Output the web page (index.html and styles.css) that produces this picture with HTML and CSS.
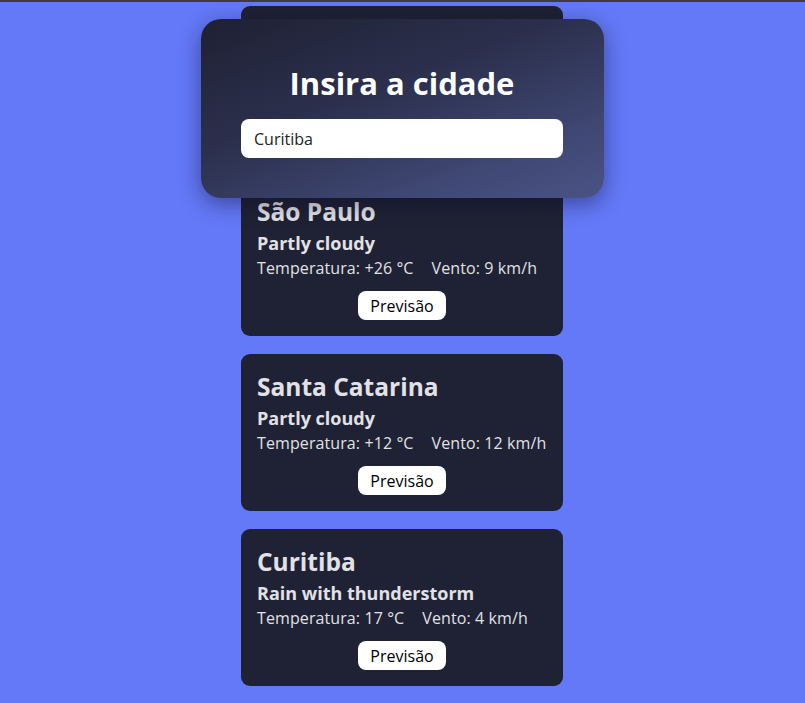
FILE: index.html
```html
<!DOCTYPE html>
<html lang="pt-BR">
<head>
<meta charset="utf-8">
<title>Clima</title>
<link rel="stylesheet" href="styles.css">
</head>
<body>
<div class="page">
  <main class="list">
    <section class="card card--first">
      <h2 class="card__city">São Paulo</h2>
      <p class="card__cond">Partly cloudy</p>
      <p class="card__info"><span>Temperatura: +26 °C</span><span>Vento: 9 km/h</span></p>
      <button class="card__btn">Previsão</button>
    </section>
    <section class="card">
      <h2 class="card__city">Santa Catarina</h2>
      <p class="card__cond">Partly cloudy</p>
      <p class="card__info"><span>Temperatura: +12 °C</span><span>Vento: 12 km/h</span></p>
      <button class="card__btn">Previsão</button>
    </section>
    <section class="card">
      <h2 class="card__city">Curitiba</h2>
      <p class="card__cond">Rain with thunderstorm</p>
      <p class="card__info"><span>Temperatura: 17 °C</span><span>Vento: 4 km/h</span></p>
      <button class="card__btn">Previsão</button>
    </section>
  </main>
  <div class="search">
    <h1 class="search__title">Insira a cidade</h1>
    <input class="search__input" type="text" value="Curitiba">
  </div>
</div>
</body>
</html>
```
FILE: styles.css
```css
* { box-sizing: border-box; }
html, body { margin: 0; padding: 0; }
body {
  background: #6479f8;
  font-family: "Open Sans", "Noto Sans", sans-serif;
  height: 703px;
  overflow: hidden;
  border-top: 2px solid #3d3d3f;
}
.page {
  position: relative;
  min-height: 701px;
}
.list {
  display: flex;
  flex-direction: column;
  align-items: center;
  gap: 18px;
  padding-top: 4px;
  padding-right: 1px;
}
.card {
  width: 322px;
  background: #1f2134;
  border-radius: 9px;
  padding: 18px 16px 16px 16px;
  color: #e1e1e6;
  display: flex;
  flex-direction: column;
}
.card--first { padding-top: 191px; }
.card__city {
  margin: 0 0 4px;
  font-size: 24.5px;
  line-height: 30px;
  font-weight: 700;
}
.card__cond {
  margin: 0 0 2px;
  font-size: 18px;
  line-height: 24px;
  font-weight: 700;
}
.card__info {
  margin: 0;
  font-size: 16px;
  line-height: 22px;
  display: flex;
  gap: 18px;
  white-space: nowrap;
  letter-spacing: 0.1px;
}
.card__btn {
  align-self: center;
  margin-top: 12px;
  height: 29px;
  width: 88px;
  border: none;
  border-radius: 8px;
  background: #ffffff;
  color: #000;
  font-family: inherit;
  font-size: 16px;
  font-weight: 500;
  padding: 0;
}
.search {
  position: absolute;
  top: 17px;
  left: 201px;
  width: 403px;
  height: 179px;
  border-radius: 20px;
  background: linear-gradient(160deg, #1e2133 0%, #2b2f4c 40%, #3e4671 75%, #4b5386 100%);
  box-shadow: 0 6px 22px rgba(10, 12, 40, 0.45);
  display: flex;
  flex-direction: column;
  align-items: center;
  padding-top: 44px;
  padding-right: 1px;
}
.search__title {
  margin: 0 0 16px;
  color: #ffffff;
  font-size: 31px;
  line-height: 40px;
  font-weight: 700;
}
.search__input {
  width: 322px;
  height: 39px;
  border: none;
  border-radius: 8px;
  background: #fff;
  padding: 0 13px;
  font-family: inherit;
  font-size: 16px;
  color: #222;
  outline: none;
}
```
